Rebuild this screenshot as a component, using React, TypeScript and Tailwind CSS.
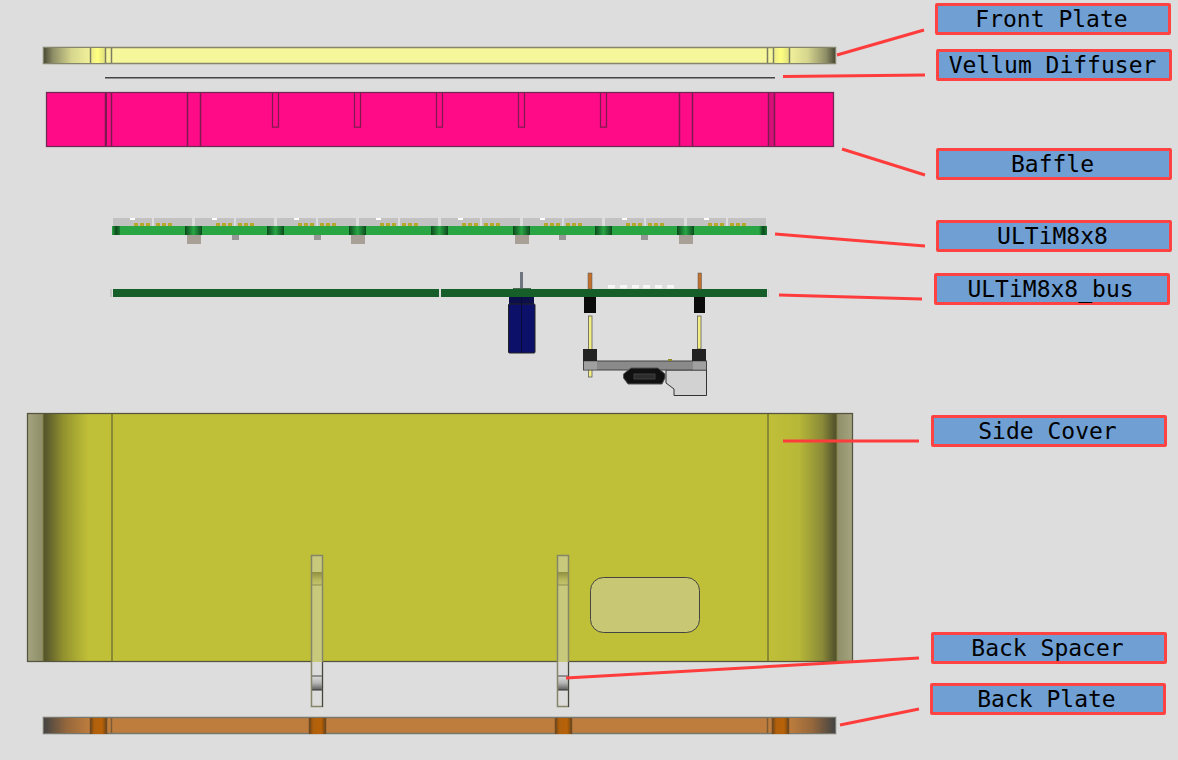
const labels = [
  { text: "Front Plate", pos: "left-[935px] top-[3px]" },
  { text: "Vellum Diffuser", pos: "left-[936px] top-[49px]" },
  { text: "Baffle", pos: "left-[936px] top-[148px]" },
  { text: "ULTiM8x8", pos: "left-[936px] top-[220px]" },
  { text: "ULTiM8x8_bus", pos: "left-[934px] top-[273px]" },
  { text: "Side Cover", pos: "left-[931px] top-[415px]" },
  { text: "Back Spacer", pos: "left-[931px] top-[632px]" },
  { text: "Back Plate", pos: "left-[930px] top-[683px]" },
];

const leaders = [
  [837, 55, 924, 30],
  [783, 76.5, 925, 75],
  [842, 149, 925, 175],
  [775, 234, 925, 246],
  [779, 295, 922, 299],
  [783, 441, 919, 441],
  [566, 678, 919, 658],
  [840, 725, 919, 709],
];

// led module boards, 82px apart
const modules = [113, 195, 277, 359, 441, 523, 605, 687];
const joints = [185, 267, 349, 431, 513, 595, 677];
const baffleSlots = [272, 354, 436, 518, 600];
const pads = [608, 620, 632, 643, 655, 667];

function Stops({ id, stops, vertical }: { id: string; stops: [number, string][]; vertical?: boolean }) {
  return (
    <linearGradient id={id} x1="0" y1="0" x2={vertical ? "0" : "1"} y2={vertical ? "1" : "0"}>
      {stops.map(([o, c]) => (
        <stop key={o} offset={o} stopColor={c} />
      ))}
    </linearGradient>
  );
}

function Spacer({ x }: { x: number }) {
  return (
    <g>
      <rect x={x} y={555} width={12} height={107} fill="#c9c97c" />
      <rect x={x} y={662} width={12} height={45} fill="#dcdcdc" />
      <rect x={x} y={572} width={12} height={13} fill="url(#spacerTop)" />
      <rect x={x} y={676} width={12} height={14} fill="url(#spacerLow)" />
      <line x1={x} x2={x + 12} y1={585} y2={585} stroke="#8f8f4c" />
      <line x1={x} x2={x + 12} y1={676} y2={676} stroke="#444" />
      <line x1={x} x2={x + 12} y1={690} y2={690} stroke="#333" />
      <rect x={x + 0.5} y={555.5} width={11} height={151} fill="none" stroke="#85856a" strokeWidth="1.5" />
      <line x1={x + 11.5} x2={x + 11.5} y1={662} y2={707} stroke="#444" />
    </g>
  );
}

function BackBand({ x }: { x: number }) {
  return (
    <g>
      <rect x={x} y={718} width={17} height={16} fill="url(#backBand)" />
      <line x1={x + 0.5} x2={x + 0.5} y1={718} y2={734} stroke="#6d4a24" strokeWidth="1.5" />
      <line x1={x + 16.5} x2={x + 16.5} y1={718} y2={734} stroke="#6d4a24" strokeWidth="1.5" />
    </g>
  );
}

function Drawing() {
  return (
    <svg className="absolute inset-0 blur-[0.35px]" width="1178" height="760" viewBox="0 0 1178 760">
      <defs>
        <Stops id="frontL" stops={[[0, "#4c4c38"], [0.2, "#8f8f68"], [0.6, "#d6d68e"], [1, "#f2f29b"]]} />
        <Stops id="frontR" stops={[[0, "#f2f29b"], [0.4, "#d6d68e"], [0.8, "#8f8f68"], [1, "#4c4c38"]]} />
        <Stops id="frontBand" stops={[[0, "#e8e88a"], [0.5, "#ffff80"], [1, "#e0e07e"]]} />
        <Stops id="boardJoint" stops={[[0, "#0b4a1c"], [0.5, "#2aa544"], [1, "#0b4a1c"]]} />
        <Stops id="boardEnd" stops={[[0, "#2aa544"], [0.5, "#0b4a1c"], [1, "#1a7a32"]]} />
        <Stops id="sideL" stops={[[0, "#4f4f2c"], [0.3, "#93932f"], [0.65, "#bfbf38"], [1, "#bfbf38"]]} />
        <Stops id="sideR" stops={[[0, "#bfbf38"], [0.45, "#b8b838"], [0.8, "#8a8a38"], [1, "#4f4f2c"]]} />
        <Stops id="stripL" stops={[[0, "#a3a37f"], [1, "#8d8d66"]]} />
        <Stops id="stripR" stops={[[0, "#8d8d66"], [1, "#a3a37f"]]} />
        <Stops id="spacerTop" vertical stops={[[0, "#8f8f3f"], [0.6, "#b8b85c"], [1, "#c3c36e"]]} />
        <Stops id="spacerLow" vertical stops={[[0, "#dcdcdc"], [0.5, "#b5b5b5"], [1, "#5c5c5c"]]} />
        <Stops id="backL" stops={[[0, "#444"], [0.5, "#96683c"], [1, "#bf7d3d"]]} />
        <Stops id="backR" stops={[[0, "#bf7d3d"], [0.5, "#96683c"], [1, "#444"]]} />
        <Stops id="backBand" stops={[[0, "#6d4414"], [0.25, "#b0600c"], [0.7, "#b86208"], [1, "#6d4414"]]} />
      </defs>

      {/* front plate */}
      <rect x="43.5" y="47.5" width="792" height="16" fill="#f6f69a" stroke="#86866e" strokeWidth="1.5" />
      <rect x="44" y="48" width="46" height="15" fill="url(#frontL)" />
      <rect x="90" y="48" width="15" height="15" fill="url(#frontBand)" />
      <rect x="773" y="48" width="16" height="15" fill="url(#frontBand)" />
      <rect x="789" y="48" width="46" height="15" fill="url(#frontR)" />
      {[90.5, 105.5, 111.5, 767.5, 773.5, 789.5].map((x) => (
        <line key={x} x1={x} x2={x} y1="48" y2="63" stroke="#7c7c60" strokeWidth="1.5" />
      ))}

      {/* vellum */}
      <line x1="105" x2="775" y1="77.75" y2="77.75" stroke="#444" strokeWidth="1.5" />

      {/* baffle */}
      <rect x="46.5" y="92.5" width="787" height="54" fill="#ff0a87" stroke="#6e2a50" strokeWidth="1.25" />
      <rect x="105" y="93" width="2" height="53" fill="#7d1a50" />
      <rect x="769" y="93" width="5" height="53" fill="#d80f78" />
      {[105.5, 111.5, 187.5, 200.5, 679.5, 692.5, 768.5, 774.5].map((x) => (
        <line key={x} x1={x} x2={x} y1="93" y2="146" stroke="#7d1a50" strokeWidth="1.5" />
      ))}
      {baffleSlots.map((x) => (
        <path key={x} d={`M${x + 0.5} 93V127H${x + 6.5}V93`} fill="none" stroke="#7d1a50" strokeWidth="1.25" />
      ))}

      {/* led boards */}
      {modules.map((x) => (
        <g key={x}>
          <rect x={x} y="218" width="39" height="8" fill="#c2c2c2" />
          <rect x={x + 41} y="218" width="38" height="8" fill="#c2c2c2" />
          <rect x={x + 17} y="218" width="5" height="2" fill="#ffffff" />
          {[21, 27, 33, 43, 49, 55].map((dx) => (
            <rect key={dx} x={x + dx} y="223" width="4" height="3" fill="#b5a82a" />
          ))}
        </g>
      ))}
      <rect x="112" y="226" width="655" height="9" fill="#2aa544" />
      <rect x="112" y="226" width="8" height="9" fill="url(#boardEnd)" />
      <rect x="759" y="226" width="8" height="9" fill="url(#boardEnd)" />
      {joints.map((x) => (
        <rect key={x} x={x} y="226" width="17" height="9" fill="url(#boardJoint)" />
      ))}
      {[187, 351, 515, 679].map((x) => (
        <rect key={x} x={x} y="235" width="14" height="9" fill="#a89f96" />
      ))}
      {[232, 314, 559, 641].map((x) => (
        <rect key={x} x={x} y="235" width="7" height="5" fill="#969696" />
      ))}

      {/* bus board */}
      <rect x="110" y="289" width="2" height="8" fill="#c4c4c4" />
      <rect x="768" y="289" width="1" height="8" fill="#cfcfcf" />
      <rect x="113" y="289" width="326" height="8" fill="#165f28" />
      <rect x="441" y="289" width="326" height="8" fill="#165f28" />
      {pads.map((x) => (
        <rect key={x} x={x} y="285" width="7" height="3.5" fill="#f6f6f6" />
      ))}
      <rect x="520" y="272" width="3" height="16" fill="#6f7680" />
      <rect x="513" y="288" width="18" height="1" fill="#4d6b52" />
      <rect x="588" y="273" width="4" height="16" fill="#c2702e" stroke="#555" strokeWidth="0.5" />
      <rect x="698" y="273" width="3.5" height="16" fill="#c2702e" stroke="#555" strokeWidth="0.5" />

      {/* capacitor */}
      <rect x="509" y="297" width="25" height="7" fill="#0b0f4a" />
      <rect x="508.5" y="304" width="26.5" height="49" rx="1" fill="#0c1068" stroke="#222" />
      <line x1="521.5" x2="521.5" y1="297" y2="353" stroke="#090c3a" />

      {/* usb daughter board */}
      <rect x="584" y="297" width="12" height="16" fill="#0b0b0b" />
      <rect x="694" y="297" width="11" height="16" fill="#0b0b0b" />
      <rect x="588.5" y="316" width="3.5" height="61" fill="#f2ee84" stroke="#555" strokeWidth="0.75" />
      <rect x="697.5" y="316" width="3.5" height="33" fill="#f2ee84" stroke="#555" strokeWidth="0.75" />
      <path d="M666 370H706.5V395.5H674V389L666 383Z" fill="#d2d2d2" stroke="#333" />
      <rect x="583.5" y="361" width="123" height="9" fill="#8a8a8a" stroke="#444" />
      <rect x="584" y="361.5" width="13" height="8" fill="#a0a0a0" />
      <rect x="693" y="361.5" width="13" height="8" fill="#a0a0a0" />
      <rect x="583" y="349" width="14" height="12" fill="#222" />
      <rect x="692" y="349" width="14" height="12" fill="#222" />
      <rect x="668" y="359" width="4" height="2" fill="#8f8a2c" />
      <path d="M631 368H658L665 374V378L662 384H628L623.5 378V374Z" fill="#111" stroke="#555" />
      <rect x="634" y="374" width="21" height="5" fill="#2c2c2c" stroke="#4a4a4a" strokeWidth="0.75" />

      {/* side cover */}
      <rect x="27.5" y="413.5" width="825" height="248" fill="#bfbf38" />
      <rect x="28" y="414" width="15" height="248" fill="url(#stripL)" />
      <rect x="43" y="414" width="69" height="248" fill="url(#sideL)" />
      <rect x="768" y="414" width="68" height="248" fill="url(#sideR)" />
      <rect x="836" y="414" width="16" height="248" fill="url(#stripR)" />
      <rect x="27.5" y="413.5" width="825" height="248" fill="none" stroke="#55553f" strokeWidth="1.25" />
      {[43.5, 112, 768, 836.5].map((x) => (
        <line key={x} x1={x} x2={x} y1="414" y2="661" stroke="#6a6a30" strokeWidth="1.25" />
      ))}
      <rect x="590.5" y="577.5" width="109" height="55" rx="13" fill="#c8c874" stroke="#444" />
      <Spacer x={311} />
      <Spacer x={557} />

      {/* back plate */}
      <rect x="43.5" y="717.5" width="792" height="16" fill="#bf7d3d" stroke="#77776e" strokeWidth="1.5" />
      <rect x="44" y="718" width="46" height="15" fill="url(#backL)" />
      <rect x="789" y="718" width="46" height="15" fill="url(#backR)" />
      {[90, 309, 555, 772].map((x) => (
        <BackBand key={x} x={x} />
      ))}
      {[111.5, 767.5].map((x) => (
        <line key={x} x1={x} x2={x} y1="718" y2="733" stroke="#7d5a34" strokeWidth="1.5" />
      ))}

      {leaders.map(([x1, y1, x2, y2]) => (
        <line key={x1 + y1} x1={x1} y1={y1} x2={x2} y2={y2} stroke="#ff3c3c" strokeWidth="3" />
      ))}
    </svg>
  );
}

export default function App() {
  return (
    <div className="relative w-[1178px] h-[760px] overflow-hidden bg-[#dddddd]">
      <Drawing />
      {labels.map((l) => (
        <div
          key={l.text}
          className={`absolute ${l.pos} flex h-[32px] w-[236px] items-center justify-center rounded-[2px] border-[3px] border-[#ff4343] bg-[#6f9fd3] pr-[3px] font-['DejaVu_Sans_Mono',monospace] text-[23px] leading-none text-black`}
        >
          {l.text}
        </div>
      ))}
    </div>
  );
}
